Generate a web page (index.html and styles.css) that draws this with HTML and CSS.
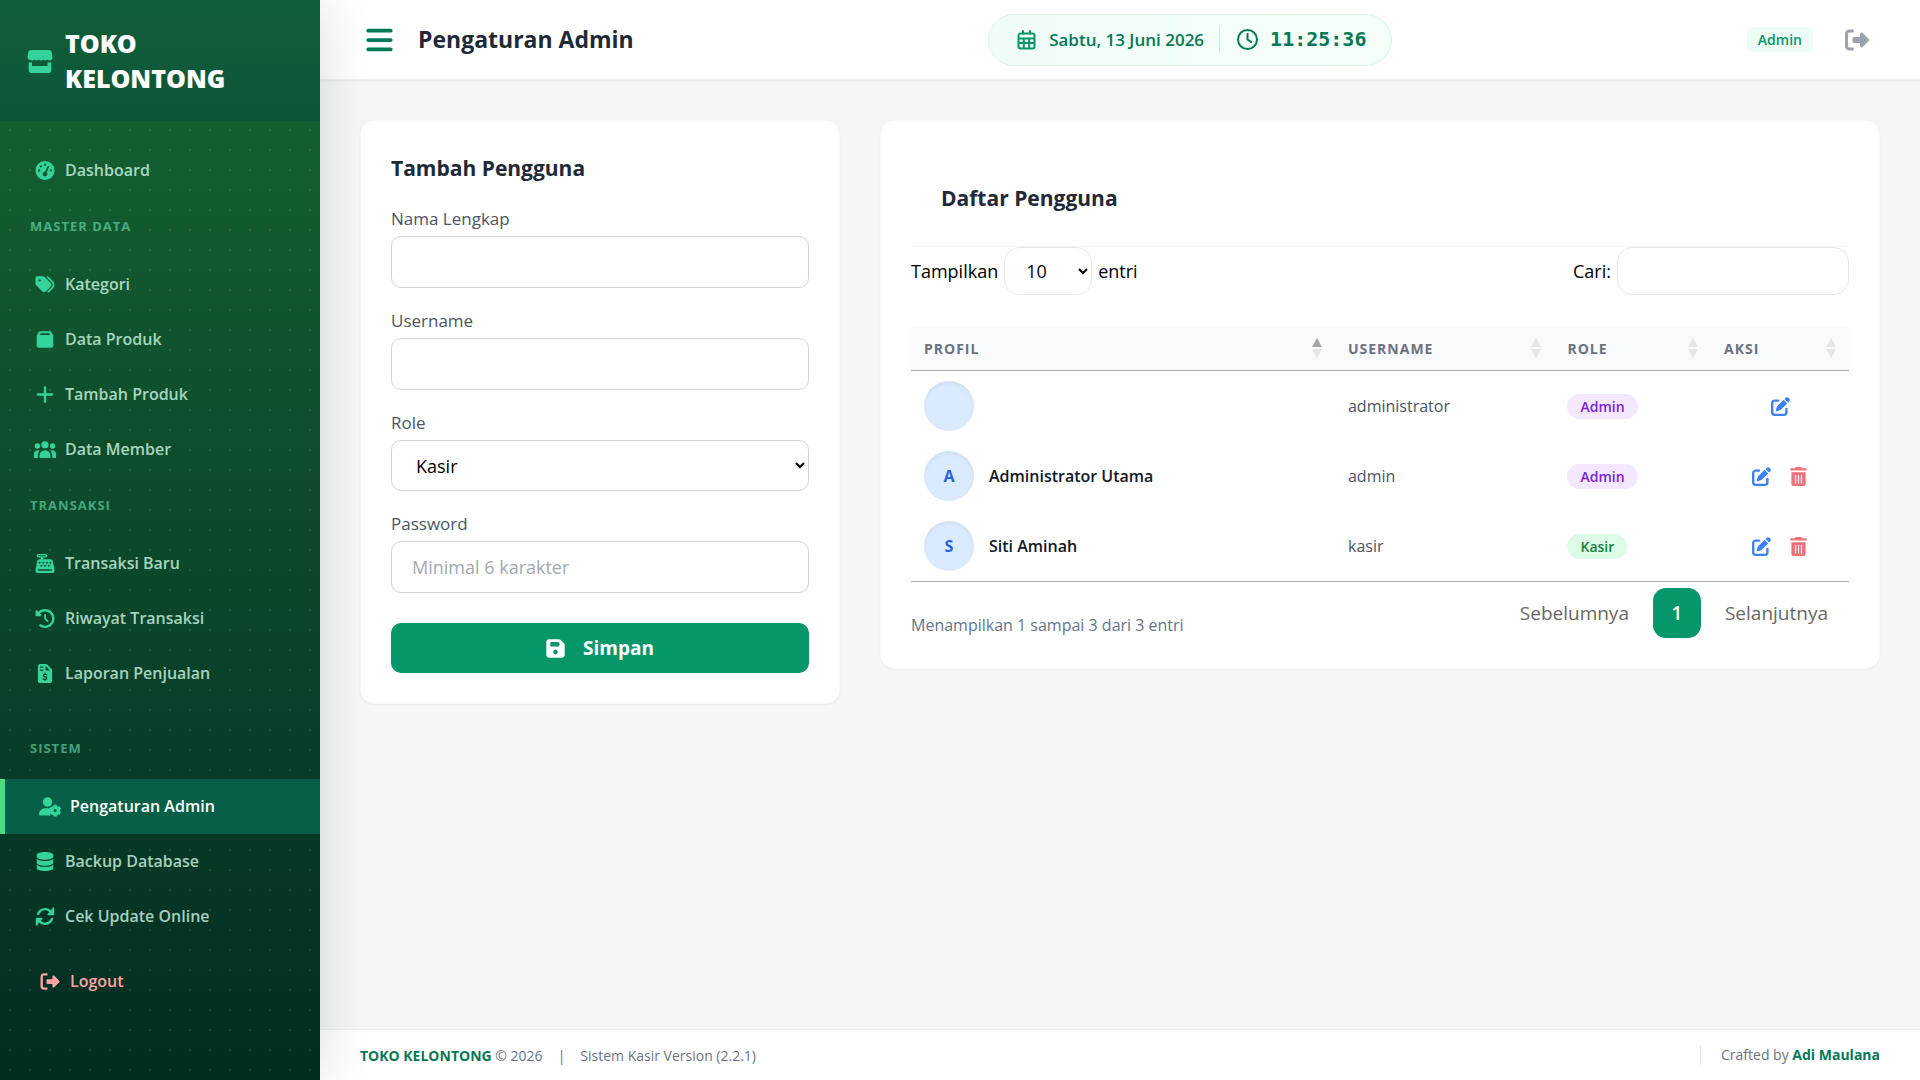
FILE: index.html
```html
<!DOCTYPE html>
<html lang="id">
<head>
<meta charset="utf-8">
<title>Pengaturan Admin - Toko Kelontong</title>
<meta name="viewport" content="width=device-width, initial-scale=1">
<link rel="stylesheet" href="styles.css">
</head>
<body>
<svg class="sprite" aria-hidden="true">
  <symbol id="i-store" viewBox="0 0 25 23"><path d="M4 0h17c2 0 3 1 3.300 2.800l.7 4.200c0 2-1 3.400-2.600 3.400-1 0-1.700-.3-2.400-.9-.8 1.100-3.500 1.200-4.400 0-.9 1.200-3.400 1.200-4.300 0-.9 1.200-3.200 1.200-4.100 0-1.500 1.300-3.200 1.300-4.300.6C.6 9.400 0 8.400 0 7l.7-4.200C1 1 2 0 4 0zM1.200 12.500H4.500v3.500h15.500v-3.500h3.800V20.500c0 1.500-1 2.500-2.500 2.500H3.700c-1.500 0-2.500-1-2.500-2.500z"/></symbol>
  <symbol id="i-gauge" viewBox="0 0 512 512"><path fill-rule="evenodd" d="M0 256a256 256 0 1 1 512 0A256 256 0 1 1 0 256zM288 96a32 32 0 1 0 -64 0 32 32 0 1 0 64 0zM256 416c35.300 0 64-28.700 64-64c0-17.400-6.900-33.100-18.100-44.600L366 161.700c5.300-12.100-.2-26.300-12.300-31.600s-26.300 .2-31.600 12.300L257.900 288c-.6 0-1.300 0-1.900 0c-35.300 0-64 28.700-64 64s28.700 64 64 64zM176 144a32 32 0 1 0 -64 0 32 32 0 1 0 64 0zM96 288a32 32 0 1 0 0-64 32 32 0 1 0 0 64zm352-32a32 32 0 1 0 -64 0 32 32 0 1 0 64 0z"/></symbol>
  <symbol id="i-tags" viewBox="0 0 512 512"><path fill-rule="evenodd" d="M345 39.100L472.800 168.400c52.400 53 52.400 138.200 0 191.200L360.800 472.900c-9.300 9.400-24.500 9.500-33.900 .2s-9.500-24.500-.2-33.900L438.600 325.900c33.900-34.300 33.900-89.400 0-123.700L310.900 72.900c-9.300-9.400-9.200-24.600 .2-33.900s24.600-9.200 33.900 .2zM0 229.500V80C0 53.500 21.500 32 48 32H197.500c17 0 33.300 6.700 45.300 18.700l168 168c25 25 25 65.500 0 90.500L277.300 442.700c-25 25-65.500 25-90.500 0l-168-168C6.700 262.700 0 246.500 0 229.500zM144 144a32 32 0 1 0 -64 0 32 32 0 1 0 64 0z"/></symbol>
  <symbol id="i-box" viewBox="0 0 512 512"><path fill-rule="evenodd" d="M32 150L80 66c12-22 32-34 56-34H376c24 0 44 12 56 34l48 84V416c0 35-29 64-64 64H96c-35 0-64-29-64-64zM142 88L112 136H400L370 88z"/></symbol>
  <symbol id="i-plus" viewBox="0 0 448 512"><path d="M256 64c0-17.700-14.300-32-32-32s-32 14.300-32 32V224H32c-17.700 0-32 14.300-32 32s14.300 32 32 32H192V448c0 17.700 14.300 32 32 32s32-14.300 32-32V288H416c17.700 0 32-14.300 32-32s-14.300-32-32-32H256z"/></symbol>
  <symbol id="i-users" viewBox="0 -1 24 20"><circle cx="12" cy="4" r="3.800"/><circle cx="4" cy="5.300" r="2.800"/><circle cx="20" cy="5.300" r="2.800"/><path d="M6.200 17.200V15.500a5.800 5.800 0 0 1 11.600 0V17.200a.7.7 0 0 1-.7.7H6.900a.7.7 0 0 1-.7-.7zM.3 17.200V14a4.200 4.200 0 0 1 6-3.800A7.800 7.800 0 0 0 4.400 15.500v2.400H1a.7.7 0 0 1-.7-.7zM23.700 17.200V14a4.200 4.200 0 0 0-6-3.800 7.800 7.800 0 0 1 1.900 5.300v2.400H23a.7.7 0 0 0 .7-.7z"/></symbol>
  <symbol id="i-register" viewBox="0 0 512 512"><path fill-rule="evenodd" d="M80 0H272c26 0 48 22 48 48s-22 48-48 48H208v48H404c32 0 58 23 63 54l40 190c3 16 5 28 5 44v16c0 35-29 64-64 64H64c-35 0-64-29-64-64V432c0-16 2-28 5-44L45 198c5-31 31-54 63-54h36V96H80C54 96 32 74 32 48S54 0 80 0zM84 36a13 13 0 0 0 0 26H268a13 13 0 0 0 0-26zM88 408a22 22 0 0 0 0 44H424a22 22 0 0 0 0-44zM112 212a24 24 0 1 0 1 0zM208 212a24 24 0 1 0 1 0zM304 212a24 24 0 1 0 1 0zM400 212a24 24 0 1 0 1 0zM160 292a24 24 0 1 0 1 0zM256 292a24 24 0 1 0 1 0zM352 292a24 24 0 1 0 1 0z"/></symbol>
  <symbol id="i-history" viewBox="0 0 512 512"><path d="M75 75L41 41C25.900 25.900 0 36.600 0 57.900V168c0 13.300 10.700 24 24 24H134.100c21.400 0 32.100-25.900 17-41l-30.800-30.800C155 85.500 203 64 256 64c106 0 192 86 192 192s-86 192-192 192c-40.800 0-78.600-12.700-109.700-34.400c-14.500-10.100-34.400-6.600-44.600 7.900s-6.600 34.400 7.900 44.600C151.200 495 201.700 512 256 512c141.400 0 256-114.600 256-256S397.400 0 256 0C185.300 0 121.300 28.700 75 75zm181 53c-13.300 0-24 10.700-24 24V256c0 6.400 2.500 12.500 7 17l72 72c9.400 9.400 24.600 9.400 33.900 0s9.400-24.600 0-33.900l-65-65V152c0-13.300-10.700-24-24-24z"/></symbol>
  <symbol id="i-invoice" viewBox="0 0 384 512"><path fill-rule="evenodd" d="M64 0H214c17 0 33 7 45 19L365 125c12 12 19 28 19 45V448c0 35-29 64-64 64H64c-35 0-64-29-64-64V64C0 29 29 0 64 0zM208 56V152c0 13 11 24 24 24H328zM72 64a18 18 0 0 0 0 36H136a18 18 0 0 0 0-36zM72 146a18 18 0 0 0 0 36H136a18 18 0 0 0 0-36z"/><path fill="none" stroke="#0a4229" stroke-width="36" stroke-linecap="round" d="M238 290C200 268 148 278 148 312C148 356 238 332 238 380C238 416 180 424 144 400M192 250V276M192 414V440"/></symbol>
  <symbol id="i-user-gear" viewBox="0 0 22 20"><circle cx="8.500" cy="5" r="4.700"/><path d="M1.200 18.500C.5 18.500 0 18 0 17.400 0 13.500 3 11.200 6.500 11.200h4c.6 0 1.100.1 1.600.2-1.300 1-1.200 2.300-.6 3.300-.9 1.300-.7 2.700.3 3.800z"/><circle cx="16.200" cy="13.600" r="3.400" fill="none" stroke="currentColor" stroke-width="3.600"/><path stroke="currentColor" stroke-width="3" d="M16.200 7.700v2M16.200 17.500v2M11.200 10.700l1.600 1M19.600 15.600l1.600 1M11.200 16.600l1.600-1M19.600 11.600l1.600-1"/></symbol>
  <symbol id="i-database" viewBox="0 0 448 512"><path d="M448 80v48c0 44.200-100.300 80-224 80S0 172.200 0 128V80C0 35.800 100.300 0 224 0S448 35.800 448 80zM393.200 214.700c20.800-7.400 39.900-16.900 54.800-28.600V288c0 44.200-100.300 80-224 80S0 332.200 0 288V186.100c14.900 11.800 34 21.200 54.800 28.600C99.700 230.700 159.500 240 224 240s124.300-9.300 169.200-25.300zM0 346.100c14.900 11.800 34 21.200 54.800 28.600C99.700 390.700 159.500 400 224 400s124.300-9.300 169.200-25.300c20.800-7.400 39.900-16.900 54.800-28.600V432c0 44.200-100.300 80-224 80S0 476.200 0 432V346.100z"/></symbol>
  <symbol id="i-rotate" viewBox="8 8 496 496"><path d="M142.900 142.900c62.200-62.200 162.700-62.500 225.300-1L327 183c-6.900 6.900-8.900 17.200-5.200 26.200s12.500 14.800 22.200 14.800H472c13.300 0 24-10.700 24-24V40c0-9.700-5.800-18.500-14.800-22.200s-19.300-1.700-26.200 5.200L413.400 96.600c-87.600-86.500-228.700-86.200-315.800 1C73.200 122 55.600 150.700 44.800 181.400c-5.900 16.700 2.900 34.900 19.500 40.800s34.900-2.900 40.800-19.500c7.700-21.800 20.200-42.300 37.800-59.800zM16 312V472c0 9.700 5.800 18.500 14.800 22.200s19.300 1.700 26.200-5.200l41.600-73.600c87.600 86.500 228.700 86.200 315.800-1c24.400-24.400 42.100-53.100 52.900-83.700c5.900-16.700-2.900-34.900-19.500-40.800s-34.900 2.900-40.800 19.500c-7.700 21.800-20.200 42.300-37.800 59.800c-62.200 62.200-162.700 62.500-225.300 1L185 329c6.900-6.900 8.900-17.200 5.200-26.200s-12.500-14.800-22.200-14.800H40c-13.300 0-24 10.700-24 24z"/></symbol>
  <symbol id="i-logout" viewBox="0 0 512 512"><path d="M377.900 105.900L500.700 228.700c7.200 7.200 11.300 17.100 11.300 27.300s-4.100 20.100-11.300 27.300L377.900 406.100c-6.400 6.400-15 9.900-24 9.900c-18.700 0-33.900-15.200-33.900-33.900l0-62.100-128 0c-17.700 0-32-14.300-32-32l0-64c0-17.700 14.300-32 32-32l128 0 0-62.100c0-18.700 15.200-33.900 33.900-33.900c9 0 17.600 3.600 24 9.900zM160 96L96 96c-17.700 0-32 14.300-32 32l0 256c0 17.700 14.300 32 32 32l64 0c17.700 0 32 14.300 32 32s-14.300 32-32 32l-64 0c-53 0-96-43-96-96L0 128C0 75 43 32 96 32l64 0c17.700 0 32 14.300 32 32s-14.300 32-32 32z"/></symbol>
  <symbol id="i-bars" viewBox="0 0 448 512"><path d="M0 96C0 78.300 14.300 64 32 64H416c17.700 0 32 14.300 32 32s-14.300 32-32 32H32C14.300 128 0 113.700 0 96zM0 256c0-17.700 14.300-32 32-32H416c17.700 0 32 14.300 32 32s-14.300 32-32 32H32c-17.700 0-32-14.300-32-32zM448 416c0 17.700-14.300 32-32 32H32c-17.700 0-32-14.300-32-32s14.300-32 32-32H416c17.700 0 32 14.300 32 32z"/></symbol>
  <symbol id="i-calendar" viewBox="0 0 18 20"><path fill="none" stroke="currentColor" stroke-width="2" stroke-linecap="round" d="M5.500 1v3M12.500 1v3M1 8.500H17M1 13H17M6.300 8.500V18M11.700 8.500V18M3 3.500H15a2 2 0 0 1 2 2V16.500a2 2 0 0 1-2 2H3a2 2 0 0 1-2-2V5.500a2 2 0 0 1 2-2z"/></symbol>
  <symbol id="i-clock" viewBox="0 0 512 512"><path d="M464 256A208 208 0 1 1 48 256a208 208 0 1 1 416 0zM0 256a256 256 0 1 0 512 0A256 256 0 1 0 0 256zM232 120V256c0 8 4 15.500 10.700 20l96 64c11 7.400 25.900 4.400 33.300-6.700s4.400-25.900-6.700-33.300L280 243.200V120c0-13.300-10.700-24-24-24s-24 10.700-24 24z"/></symbol>
  <symbol id="i-save" viewBox="0 0 448 512"><path fill-rule="evenodd" d="M64 32C28.700 32 0 60.700 0 96V416c0 35.300 28.700 64 64 64H384c35.300 0 64-28.700 64-64V173.300c0-17-6.700-33.300-18.700-45.300L352 50.700C340 38.700 323.700 32 306.700 32H64zm64 64H288c17.700 0 32 14.300 32 32v48c0 17.700-14.300 32-32 32H128c-17.700 0-32-14.300-32-32V128c0-17.700 14.300-32 32-32zM224 288a56 56 0 1 1 0 112 56 56 0 1 1 0-112z"/></symbol>
  <symbol id="i-edit" viewBox="0 0 512 512"><path d="M471.600 21.700c-21.900-21.900-57.300-21.900-79.200 0L362.300 51.700l97.900 97.900 30.100-30.100c21.900-21.900 21.900-57.300 0-79.200L471.600 21.700zm-299.200 220c-6.100 6.100-10.800 13.600-13.500 21.900l-29.600 88.800c-2.900 8.600-.6 18.100 5.800 24.600s15.900 8.700 24.600 5.800l88.800-29.600c8.200-2.700 15.700-7.400 21.900-13.500L437.700 172.300 339.700 74.300 172.400 241.700zM96 64C43 64 0 107 0 160V416c0 53 43 96 96 96H352c53 0 96-43 96-96V320c0-17.700-14.300-32-32-32s-32 14.300-32 32v96c0 17.700-14.300 32-32 32H96c-17.700 0-32-14.300-32-32V160c0-17.700 14.300-32 32-32h96c17.700 0 32-14.300 32-32s-14.300-32-32-32H96z"/></symbol>
  <symbol id="i-trash" viewBox="0 0 448 512"><path fill-rule="evenodd" d="M135.200 17.700L128 32H32C14.300 32 0 46.300 0 64S14.300 96 32 96H416c17.700 0 32-14.300 32-32s-14.300-32-32-32H320l-7.200-14.300C307.400 6.800 296.300 0 284.200 0H163.800c-12.100 0-23.200 6.800-28.600 17.700zM416 144H32V448c0 35.300 28.700 64 64 64H352c35.300 0 64-28.700 64-64V144zM160 224V432c0 8.800-7.200 16-16 16s-16-7.200-16-16V224c0-8.800 7.200-16 16-16s16 7.200 16 16zm80 0V432c0 8.800-7.200 16-16 16s-16-7.200-16-16V224c0-8.800 7.200-16 16-16s16 7.200 16 16zm80 0V432c0 8.800-7.200 16-16 16s-16-7.200-16-16V224c0-8.800 7.200-16 16-16s16 7.200 16 16z"/></symbol>
  <symbol id="i-sort" viewBox="0 0 10 20"><path class="sort-up" d="M5 0l5 9H0z"/><path class="sort-down" d="M0 11h10l-5 9z"/></symbol>
</svg>

<div class="app">
  <aside class="sidebar">
    <div class="brand">
      <svg class="brand-icon"><use href="#i-store"/></svg>
      <span class="brand-name">TOKO KELONTONG</span>
    </div>
    <nav class="nav">
      <a class="nav-link" href="#"><svg class="nav-icon"><use href="#i-gauge"/></svg>Dashboard</a>
      <h2 class="nav-heading">MASTER DATA</h2>
      <a class="nav-link" href="#"><svg class="nav-icon"><use href="#i-tags"/></svg>Kategori</a>
      <a class="nav-link" href="#"><svg class="nav-icon"><use href="#i-box"/></svg>Data Produk</a>
      <a class="nav-link" href="#"><svg class="nav-icon"><use href="#i-plus"/></svg>Tambah Produk</a>
      <a class="nav-link" href="#"><svg class="nav-icon"><use href="#i-users"/></svg>Data Member</a>
      <h2 class="nav-heading">TRANSAKSI</h2>
      <a class="nav-link" href="#"><svg class="nav-icon"><use href="#i-register"/></svg>Transaksi Baru</a>
      <a class="nav-link" href="#"><svg class="nav-icon"><use href="#i-history"/></svg>Riwayat Transaksi</a>
      <a class="nav-link" href="#"><svg class="nav-icon"><use href="#i-invoice"/></svg>Laporan Penjualan</a>
      <h2 class="nav-heading nav-heading-spaced">SISTEM</h2>
      <a class="nav-link nav-link-active" href="#" aria-current="page"><svg class="nav-icon nav-icon-large"><use href="#i-user-gear"/></svg>Pengaturan Admin</a>
      <a class="nav-link" href="#"><svg class="nav-icon"><use href="#i-database"/></svg>Backup Database</a>
      <a class="nav-link" href="#"><svg class="nav-icon"><use href="#i-rotate"/></svg>Cek Update Online</a>
      <a class="nav-link nav-link-logout" href="#"><svg class="nav-icon"><use href="#i-logout"/></svg>Logout</a>
    </nav>
  </aside>

  <div class="page">
    <header class="topbar">
      <div class="topbar-left">
        <button class="icon-button menu-button" type="button" aria-label="Menu"><svg class="menu-icon"><use href="#i-bars"/></svg></button>
        <h1 class="page-title">Pengaturan Admin</h1>
      </div>
      <div class="datetime">
        <svg class="calendar-icon"><use href="#i-calendar"/></svg>
        <span class="date">Sabtu, 13 Juni 2026</span>
        <span class="datetime-divider"></span>
        <svg class="clock-icon"><use href="#i-clock"/></svg>
        <time class="time">11:25:36</time>
      </div>
      <div class="topbar-right">
        <span class="user-badge">Admin</span>
        <a class="signout" href="#" aria-label="Logout"><svg class="signout-icon"><use href="#i-logout"/></svg></a>
      </div>
    </header>

    <main class="content">
      <section class="card">
        <form class="user-form">
          <h2 class="card-title">Tambah Pengguna</h2>
          <div class="field">
            <label for="name">Nama Lengkap</label>
            <input class="control" id="name" type="text">
          </div>
          <div class="field">
            <label for="username">Username</label>
            <input class="control" id="username" type="text">
          </div>
          <div class="field">
            <label for="role">Role</label>
            <select class="control control-select" id="role"><option>Kasir</option><option>Admin</option></select>
          </div>
          <div class="field">
            <label for="password">Password</label>
            <input class="control" id="password" type="password" placeholder="Minimal 6 karakter">
          </div>
          <button class="save-button" type="button"><svg class="save-icon"><use href="#i-save"/></svg>Simpan</button>
        </form>
      </section>

      <section class="card">
        <div class="list-header"><h2 class="card-title">Daftar Pengguna</h2></div>
        <div class="table-tools">
          <label class="tool">Tampilkan <select class="tool-control length-select"><option>10</option><option>25</option></select> entri</label>
          <label class="tool">Cari: <input class="tool-control search-input" type="search"></label>
        </div>
        <table class="users">
          <thead>
            <tr>
              <th class="col-profile"><div class="th-inner">PROFIL<svg class="sort sort-asc"><use href="#i-sort"/></svg></div></th>
              <th class="col-username"><div class="th-inner">USERNAME<svg class="sort"><use href="#i-sort"/></svg></div></th>
              <th class="col-role"><div class="th-inner">ROLE<svg class="sort"><use href="#i-sort"/></svg></div></th>
              <th class="col-action"><div class="th-inner">AKSI<svg class="sort"><use href="#i-sort"/></svg></div></th>
            </tr>
          </thead>
          <tbody>
            <tr>
              <td><div class="profile"><span class="avatar"></span></div></td>
              <td>administrator</td>
              <td><span class="role role-admin">Admin</span></td>
              <td><div class="actions"><button class="icon-button edit" type="button" aria-label="Edit"><svg class="action-icon"><use href="#i-edit"/></svg></button></div></td>
            </tr>
            <tr>
              <td><div class="profile"><span class="avatar">A</span>Administrator Utama</div></td>
              <td>admin</td>
              <td><span class="role role-admin">Admin</span></td>
              <td><div class="actions"><button class="icon-button edit" type="button" aria-label="Edit"><svg class="action-icon"><use href="#i-edit"/></svg></button><button class="icon-button delete" type="button" aria-label="Hapus"><svg class="action-icon"><use href="#i-trash"/></svg></button></div></td>
            </tr>
            <tr>
              <td><div class="profile"><span class="avatar">S</span>Siti Aminah</div></td>
              <td>kasir</td>
              <td><span class="role role-kasir">Kasir</span></td>
              <td><div class="actions"><button class="icon-button edit" type="button" aria-label="Edit"><svg class="action-icon"><use href="#i-edit"/></svg></button><button class="icon-button delete" type="button" aria-label="Hapus"><svg class="action-icon"><use href="#i-trash"/></svg></button></div></td>
            </tr>
          </tbody>
        </table>
        <div class="table-footer">
          <p class="table-info">Menampilkan 1 sampai 3 dari 3 entri</p>
          <div class="pagination">
            <a class="page-link" href="#">Sebelumnya</a>
            <a class="page-link page-link-current" href="#">1</a>
            <a class="page-link" href="#">Selanjutnya</a>
          </div>
        </div>
      </section>
    </main>

    <footer class="footer">
      <div class="footer-left"><span><strong>TOKO KELONTONG</strong> © 2026</span><span>|</span><span>Sistem Kasir Version (2.2.1)</span></div>
      <div class="footer-right">Crafted by <a class="author" href="#">Adi Maulana</a></div>
    </footer>
  </div>
</div>
</body>
</html>
```
FILE: styles.css
```css
*, *::before, *::after { box-sizing: border-box; }

body {
  margin: 0;
  background: #f5f6f8;
  color: #111;
  font-family: "Open Sans", "Noto Sans", sans-serif;
  font-size: 16px;
  line-height: 25px;
}

h1, h2, p { margin: 0; }
a { color: inherit; text-decoration: none; }
svg { display: block; flex: none; fill: currentColor; }
button, input, select { font: inherit; }
.sprite { display: none; }

.icon-button {
  display: flex;
  padding: 0;
  border: 0;
  background: none;
  cursor: pointer;
}

.app { display: flex; min-height: 100vh; }

/* Sidebar */
.sidebar {
  position: relative;
  z-index: 1;
  flex: none;
  width: 320px;
  background:
    radial-gradient(circle at 10px 10px, rgba(255, 255, 255, .09) 1px, transparent 1px) 0 0 / 20px 20px,
    linear-gradient(#166534, #022c22);
  box-shadow: 0 0 50px rgba(0, 0, 0, .14);
}

.brand {
  display: flex;
  align-items: center;
  gap: 12px;
  padding: 26px 27px 25px;
  background: linear-gradient(#115e3a, #0d5638);
  color: #fff;
}
.brand-icon { width: 26px; height: 23px; color: #34d399; }
.brand-name { font-size: 25px; font-weight: 800; line-height: 35px; }

.nav { padding: 22px 0 40px; }
.nav-heading {
  padding: 18px 30px 21px;
  color: rgba(110, 231, 183, .6);
  font-size: 13px;
  font-weight: 700;
  letter-spacing: 1px;
  line-height: 20px;
}
.nav-heading-spaced { margin-top: 19px; }
.nav-link {
  display: flex;
  align-items: center;
  gap: 5px;
  height: 55px;
  padding: 0 30px;
  color: rgba(209, 250, 229, .8);
  font-weight: 600;
}
.nav-icon { width: 30px; height: 19px; color: #34d399; }
.nav-icon-large { height: 20px; }
.nav-link-active {
  border-left: 5px solid #4ade80;
  background: #065f46;
  color: #fff;
}
.nav-link-logout { margin-top: 10px; padding-left: 35px; color: #fca5a5; }
.nav-link-logout .nav-icon { color: inherit; }

/* Top bar */
.page { display: flex; flex: 1; flex-direction: column; min-width: 0; }
.topbar {
  display: flex;
  align-items: center;
  justify-content: space-between;
  height: 80px;
  padding: 0 51px 0 46px;
  border-bottom: 1px solid #eceef0;
  background: #fff;
  box-shadow: 0 1px 2px rgba(0, 0, 0, .06);
}
.topbar-left { display: flex; align-items: center; gap: 25px; }
.menu-button { color: #047857; }
.menu-icon { width: 27px; height: 30px; }
.page-title { color: #1f2937; font-size: 23px; font-weight: 700; line-height: 35px; }

.datetime {
  display: flex;
  align-items: center;
  height: 52px;
  padding: 0 25px 0 28px;
  border: 1px solid #d7f7e7;
  border-radius: 26px;
  background: linear-gradient(to right, #f0fdf6, #f3fef7);
  color: #047857;
}
.calendar-icon { width: 19px; height: 20px; margin-right: 13px; color: #059669; }
.date { font-size: 17px; font-weight: 600; }
.datetime-divider { width: 1px; height: 25px; margin: 0 17px 0 15px; background: #c9f2de; }
.clock-icon { width: 21px; height: 21px; margin-right: 12px; }
.time { font-family: "DejaVu Sans Mono", monospace; font-size: 20px; font-weight: 700; }

.topbar-right { display: flex; align-items: center; gap: 32px; }
.user-badge {
  padding: 0 11px;
  border-radius: 6px;
  background: #ecfdf5;
  color: #059669;
  font-size: 14px;
  font-weight: 600;
}
.signout { color: #9ca3af; }
.signout-icon { width: 24px; height: 24px; }

/* Cards */
.content {
  display: grid;
  flex: 1;
  grid-template-columns: minmax(0, 12fr) minmax(0, 25fr);
  align-items: start;
  gap: 40px;
  padding: 40px;
}
.card {
  padding: 30px;
  border: 1px solid #f8f9fa;
  border-radius: 14px;
  background: #fff;
  box-shadow: 0 1px 2px rgba(0, 0, 0, .05);
}
.card-title { color: #1f2937; font-size: 21px; font-weight: 700; line-height: 35px; }

.user-form { display: flex; flex-direction: column; gap: 20px; }
.field { display: flex; flex-direction: column; gap: 5px; color: #4b5563; font-size: 17px; font-weight: 500; }
.control {
  width: 100%;
  height: 52px;
  padding: 0 20px;
  border: 1px solid #d1d5db;
  border-radius: 10px;
  background: #fff;
  color: #000;
  font-size: 18px;
  font-weight: 400;
}
.control-select { height: 51px; }
.control::placeholder { color: #a3a8b2; }
.save-button {
  display: flex;
  align-items: center;
  justify-content: center;
  gap: 18px;
  height: 50px;
  margin-top: 10px;
  border: 0;
  border-radius: 10px;
  background: #059669;
  color: #fff;
  font-size: 19px;
  font-weight: 700;
}
.save-icon { width: 19px; height: 21px; }

/* User list */
.list-header { padding: 30px; border-bottom: 1px solid #f3f4f6; }
.table-tools { display: flex; justify-content: space-between; align-items: flex-start; height: 79px; }
.tool { display: flex; align-items: center; gap: 6px; color: #000; font-size: 18px; }
.tool-control {
  height: 48px;
  border: 1px solid #e5e7eb;
  border-radius: 15px;
  background: #fff;
}
.length-select { width: 88px; padding: 0 17px; }
.search-input { width: 232px; padding: 0 20px; }

.users {
  width: 100%;
  border-bottom: 1px solid #a8aaad;
  border-collapse: separate;
  border-spacing: 0;
  table-layout: fixed;
}
.col-profile { width: 45.2%; }
.col-username { width: 23.4%; }
.col-role { width: 16.7%; }
.col-action { width: 14.7%; }
.users th {
  height: 45px;
  padding: 0 13px;
  border-bottom: 1px solid #a8aaad;
  background: #f9fafb;
  color: #6b7280;
  font-size: 14px;
  font-weight: 700;
  letter-spacing: 1px;
}
.th-inner { display: flex; align-items: center; justify-content: space-between; }
.sort { width: 10px; height: 20px; fill: #e3e5e8; }
.sort-up { fill: inherit; }
.sort-asc { color: #a3a5a8; fill: #a3a5a8; }
.sort-down { fill: #e3e5e8; }
.users td { height: 70px; padding: 0 13px; color: #4b5563; }
.profile { display: flex; align-items: center; gap: 15px; color: #111827; font-weight: 600; }
.avatar {
  display: flex;
  align-items: center;
  justify-content: center;
  width: 50px;
  height: 50px;
  border-radius: 50%;
  background: #dbeafe;
  box-shadow: inset 0 2px 4px rgba(0, 0, 0, .06);
  color: #2563eb;
  font-weight: 700;
}
.role { display: inline-block; padding: 0 13px; border-radius: 13px; font-size: 14px; font-weight: 600; }
.role-admin { background: #f3e8ff; color: #7e22ce; }
.role-kasir { background: #dcfce7; color: #15803d; }
.actions { display: flex; justify-content: center; gap: 18px; }
.edit { color: #3b82f6; }
.delete { color: #f07178; }
.action-icon { width: 19px; height: 19px; }

.table-footer { display: flex; justify-content: space-between; padding-top: 6px; }
.table-info { padding-top: 25px; color: #64748b; }
.pagination { display: flex; align-items: flex-start; gap: 3px; }
.page-link {
  min-width: 48px;
  padding: 0 21px;
  border-radius: 13px;
  color: #666;
  font-size: 19px;
  line-height: 50px;
  text-align: center;
}
.page-link-current { padding: 0; background: #059669; color: #fff; font-weight: 600; }

/* Footer */
.footer {
  display: flex;
  align-items: center;
  justify-content: space-between;
  height: 51px;
  padding: 0 40px;
  border-top: 1px solid #e9ebee;
  background: #fff;
  color: #6b7280;
  font-size: 14px;
}
.footer-left { display: flex; gap: 15px; }
.footer strong, .author { color: #047857; font-weight: 700; }
.footer-right { padding-left: 20px; border-left: 1px solid #e5e7eb; line-height: 20px; }
```
